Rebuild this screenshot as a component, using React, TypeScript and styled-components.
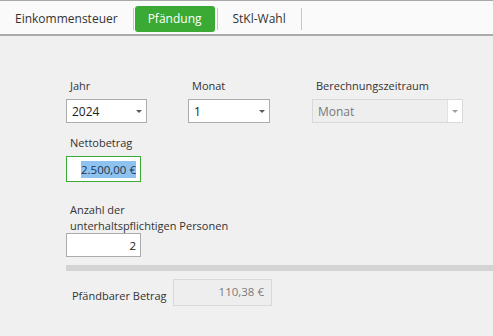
import React from "react";
import styled, { createGlobalStyle } from "styled-components";

const GlobalStyle = createGlobalStyle`
  html, body {
    margin: 0;
    padding: 0;
    background: #f0f0f0;
  }
  body {
    font-family: "Open Sans", "Noto Sans", sans-serif;
    font-size: 11px;
    color: #333333;
  }
`;

const Page = styled.div`
  width: 493px;
  height: 336px;
  overflow: hidden;
  background: #f0f0f0;
`;

const TabBar = styled.div`
  display: flex;
  align-items: center;
  height: 31px;
  padding-top: 2px;
  background: #fafafa;
  border-top: 1px solid #a9a9a9;
  border-bottom: 2px solid #ababab;
`;

const Tab = styled.div<{ $active?: boolean }>`
  display: flex;
  align-items: center;
  justify-content: center;
  height: 26px;
  padding: 0 ${(p) => (p.$active ? "13px" : "15px")};
  margin: ${(p) => (p.$active ? "0 2px 0 1px" : "0")};
  border-radius: 3px;
  font-size: 12px;
  color: ${(p) => (p.$active ? "#ffffff" : "#333333")};
  background: ${(p) => (p.$active ? "#3aaa35" : "transparent")};
`;

const TabDivider = styled.div`
  width: 1px;
  height: 22px;
  background: #c6c6c6;
`;

const Form = styled.div`
  padding: 42px 0 0 66px;
`;

const Row = styled.div<{ $gap?: number }>`
  display: flex;
  align-items: flex-end;
  margin-top: ${(p) => p.$gap ?? 0}px;
`;

const Field = styled.div<{ $width: number }>`
  display: flex;
  flex-direction: column;
  width: ${(p) => p.$width}px;
`;

const Label = styled.div<{ $space?: number }>`
  padding-left: 4px;
  line-height: 16px;
  margin-bottom: ${(p) => p.$space ?? 5}px;
  white-space: nowrap;
  color: #333333;
`;

const Select = styled.div<{ $disabled?: boolean; $width?: number }>`
  display: flex;
  align-items: stretch;
  width: ${(p) => (p.$width ? `${p.$width}px` : "auto")};
  height: 24px;
  box-sizing: border-box;
  border: 1px solid ${(p) => (p.$disabled ? "#d9d9d9" : "#acacac")};
  background: ${(p) => (p.$disabled ? "#eeeeee" : "#ffffff")};
`;

const SelectValue = styled.div<{ $disabled?: boolean }>`
  flex: 1;
  display: flex;
  align-items: center;
  padding-left: 5px;
  font-size: 12px;
  color: ${(p) => (p.$disabled ? "#7a7a7a" : "#222222")};
`;

const Arrow = styled.div<{ $boxed?: boolean }>`
  width: 14px;
  display: flex;
  align-items: center;
  justify-content: center;
  background: ${(p) => (p.$boxed ? "#ffffff" : "transparent")};
  border-left: ${(p) => (p.$boxed ? "1px solid #e2e2e2" : "none")};
  &::after {
    content: "";
    border-left: 3px solid transparent;
    border-right: 3px solid transparent;
    border-top: 3px solid ${(p) => (p.$boxed ? "#a0a0a0" : "#5a5a5a")};
  }
`;

const Input = styled.div<{ $focused?: boolean; $height: number }>`
  display: flex;
  align-items: center;
  justify-content: flex-end;
  width: 75px;
  height: ${(p) => p.$height}px;
  box-sizing: border-box;
  padding-right: 4px;
  border: 1px solid ${(p) => (p.$focused ? "#3aaa35" : "#acacac")};
  background: #ffffff;
  font-size: 11.5px;
  color: #222222;
`;

const Selected = styled.span`
  background: #8fc3ef;
  color: #1c3550;
  line-height: 17px;
`;

const Divider = styled.div`
  height: 6px;
  margin-top: 8px;
  background: #d4d4d4;
`;

const ResultRow = styled.div`
  display: flex;
  align-items: center;
  margin-top: 8px;
`;

const ResultLabel = styled.div`
  width: 107px;
  padding-left: 6px;
  padding-top: 5px;
  box-sizing: border-box;
  white-space: nowrap;
`;

const ResultValue = styled.div`
  width: 99px;
  height: 27px;
  box-sizing: border-box;
  padding: 4px 7px 0 0;
  text-align: right;
  border: 1px solid #d9d9d9;
  background: #eeeeee;
  font-size: 11.5px;
  color: #7a7a7a;
`;

export default function App() {
  return (
    <Page>
      <GlobalStyle />
      <TabBar>
        <Tab>Einkommensteuer</Tab>
        <TabDivider />
        <Tab $active>Pfändung</Tab>
        <TabDivider />
        <Tab>StKl-Wahl</Tab>
        <TabDivider />
      </TabBar>
      <Form>
        <Row>
          <Field $width={122}>
            <Label>Jahr</Label>
            <Select $width={81}>
              <SelectValue>2024</SelectValue>
              <Arrow />
            </Select>
          </Field>
          <Field $width={124}>
            <Label>Monat</Label>
            <Select $width={82}>
              <SelectValue>1</SelectValue>
              <Arrow />
            </Select>
          </Field>
          <Field $width={151}>
            <Label>Berechnungszeitraum</Label>
            <Select $disabled>
              <SelectValue $disabled>Monat</SelectValue>
              <Arrow $boxed />
            </Select>
          </Field>
        </Row>
        <Row $gap={12}>
          <Field $width={122}>
            <Label>Nettobetrag</Label>
            <Input $focused $height={26}>
              <Selected>2.500,00 €</Selected>
            </Input>
          </Field>
        </Row>
        <Row $gap={20}>
          <Field $width={200}>
            <Label $space={-1}>
              Anzahl der
              <br />
              unterhaltspflichtigen Personen
            </Label>
            <Input $height={24}>2</Input>
          </Field>
        </Row>
        <Divider />
        <ResultRow>
          <ResultLabel>Pfändbarer Betrag</ResultLabel>
          <ResultValue>110,38 €</ResultValue>
        </ResultRow>
      </Form>
    </Page>
  );
}
